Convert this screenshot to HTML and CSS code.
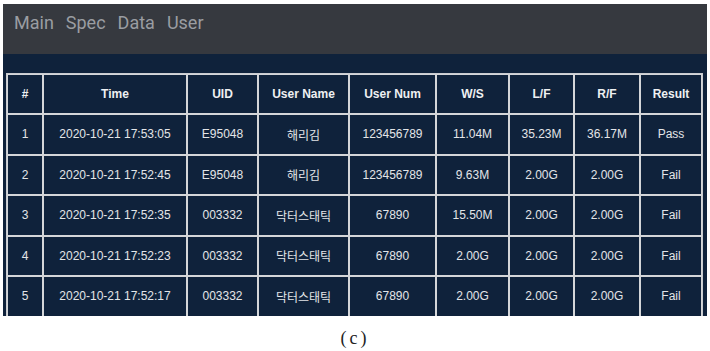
FILE: index.html
```html
<!DOCTYPE html>
<html lang="en">
<head>
    <meta charset="UTF-8">
    <title>Data</title>
    <link rel="stylesheet" href="styles.css">
</head>
<body>
    <div class="figure">
        <div class="panel">
            <nav class="navbar">
                <a href="#" class="nav-link">Main</a>
                <a href="#" class="nav-link">Spec</a>
                <a href="#" class="nav-link">Data</a>
                <a href="#" class="nav-link">User</a>
            </nav>
            <div class="content">
                <table class="data-table">
                    <thead>
                        <tr>
                            <th class="c-no">#</th>
                            <th class="c-time">Time</th>
                            <th class="c-uid">UID</th>
                            <th class="c-name">User Name</th>
                            <th class="c-num">User Num</th>
                            <th class="c-ws">W/S</th>
                            <th class="c-lf">L/F</th>
                            <th class="c-rf">R/F</th>
                            <th class="c-res">Result</th>
                        </tr>
                    </thead>
                    <tbody>
                        <tr>
                            <td>1</td><td>2020-10-21 17:53:05</td><td>E95048</td><td>해리김</td><td>123456789</td><td>11.04M</td><td>35.23M</td><td>36.17M</td><td>Pass</td>
                        </tr>
                        <tr>
                            <td>2</td><td>2020-10-21 17:52:45</td><td>E95048</td><td>해리김</td><td>123456789</td><td>9.63M</td><td>2.00G</td><td>2.00G</td><td>Fail</td>
                        </tr>
                        <tr>
                            <td>3</td><td>2020-10-21 17:52:35</td><td>003332</td><td>닥터스태틱</td><td>67890</td><td>15.50M</td><td>2.00G</td><td>2.00G</td><td>Fail</td>
                        </tr>
                        <tr>
                            <td>4</td><td>2020-10-21 17:52:23</td><td>003332</td><td>닥터스태틱</td><td>67890</td><td>2.00G</td><td>2.00G</td><td>2.00G</td><td>Fail</td>
                        </tr>
                        <tr>
                            <td>5</td><td>2020-10-21 17:52:17</td><td>003332</td><td>닥터스태틱</td><td>67890</td><td>2.00G</td><td>2.00G</td><td>2.00G</td><td>Fail</td>
                        </tr>
                    </tbody>
                </table>
            </div>
        </div>
        <div class="caption">(c)</div>
    </div>
</body>
</html>
```

FILE: styles.css
```css
body {
    margin: 0;
    background: #fff;
    font-family: 'Liberation Sans', Arial, 'Noto Sans CJK KR', sans-serif;
}
.figure {
    padding: 4px 3px 0 3px;
}
.panel {
    width: 704px;
    height: 312px;
    background: #0f223b;
    overflow: hidden;
}
.navbar {
    height: 50px;
    box-sizing: border-box;
    padding: 8px 0 0 11px;
    background: #36393f;
    display: flex;
    gap: 12px;
    align-items: flex-start;
}
.nav-link {
    font-family: Roboto, 'Liberation Sans', sans-serif;
    font-size: 18px;
    line-height: 21px;
    color: #9a9da2;
    text-decoration: none;
}
.content {
    padding: 20px 0 0 4px;
}
.data-table {
    width: 695px;
    table-layout: fixed;
    border-collapse: separate;
    border-spacing: 0;
    outline: 1px solid #c9ccd0;
    color: #e3e5e8;
    font-size: 12px;
}
.data-table th,
.data-table td {
    border: 1px solid #d4d6d9;
    text-align: center;
    vertical-align: middle;
    padding: 0;
}
.data-table th {
    height: 38px;
    font-weight: 700;
    color: #eef0f2;
}
.data-table td {
    height: 38.5px;
}
.c-no { width: 34px; }
.c-time { width: 142px; }
.c-uid { width: 69px; }
.c-name { width: 89px; }
.c-num { width: 85px; }
.c-ws { width: 71px; }
.c-lf { width: 63px; }
.c-rf { width: 64px; }
.c-res { width: 60px; }
.caption {
    text-align: center;
    font-family: 'Liberation Serif', 'Times New Roman', serif;
    font-size: 18px;
    letter-spacing: 3px;
    color: #222;
    padding-top: 12px;
}
```
